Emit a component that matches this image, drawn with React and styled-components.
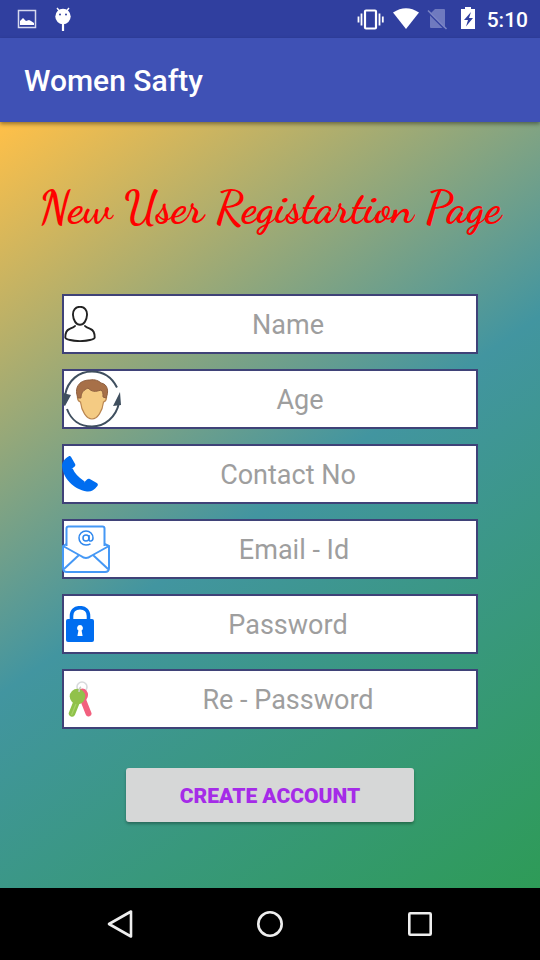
import styled, { createGlobalStyle } from "styled-components";

const GlobalStyle = createGlobalStyle`
  * {
    box-sizing: border-box;
  }

  body {
    margin: 0;
    font-family: Roboto, "Liberation Sans", sans-serif;
  }
`;

const PictureIcon = () => (
  <svg width="20" height="20" viewBox="0 0 20 20" aria-hidden="true">
    <rect x="1.500" y="1.500" width="17" height="17" fill="none" stroke="#d6d9ee" strokeWidth="1.5" />
    <path d="M3 16v-4l3-3 3 3 3-1 2 1 3 2v2z" fill="#fff" />
  </svg>
);

const DebugIcon = () => (
  <svg width="18" height="24" viewBox="0 0 18 24" aria-hidden="true">
    <path d="M3 1l2.500 3M15 1l-2.500 3" stroke="#fff" strokeWidth="1.400" />
    <circle cx="9" cy="9.500" r="7.700" fill="#fff" />
    <circle cx="6" cy="7.500" r="1" fill="#303f9f" />
    <circle cx="12" cy="7.500" r="1" fill="#303f9f" />
    <path d="M9 17v7" stroke="#fff" strokeWidth="2.200" />
  </svg>
);

const VibrateIcon = () => (
  <svg width="28" height="24" viewBox="0 0 28 24" aria-hidden="true">
    <rect x="8" y="3.500" width="11" height="18" rx="1" fill="none" stroke="#fff" strokeWidth="2.200" />
    <path d="M4.500 6.500v12M1.500 9.500v6M22.500 6.500v12M25.800 9.500v6" stroke="#fff" strokeWidth="1.800" />
  </svg>
);

const WifiIcon = () => (
  <svg width="26" height="24" viewBox="0 0 26 24" aria-hidden="true">
    <path d="M0 5.500Q13-3 26 5.500L13 22z" fill="#fff" />
  </svg>
);

const NoSimIcon = () => (
  <svg width="22" height="24" viewBox="0 0 22 24" aria-hidden="true">
    <path d="M8 2h9a1 1 0 0 1 1 1v18H4a1 1 0 0 1-1-1V7z" fill="#6f7abf" />
    <path d="M0 4.500l18 18" stroke="#303f9f" strokeWidth="1.500" />
    <path d="M1 3.500l18.500 18.500" stroke="#7a84c4" strokeWidth="1.600" />
  </svg>
);

const BatteryIcon = () => (
  <svg width="14" height="24" viewBox="0 0 14 24" aria-hidden="true">
    <path d="M4 0h6v2h4v20H0V2h4z" fill="#fff" />
    <path d="M10 5l-7 8h4l-2 6.500L12 11H8l2-6z" fill="#303f9f" />
  </svg>
);

const PersonIcon = () => (
  <svg width="36" height="36" viewBox="0 0 36 36" aria-hidden="true">
    <g fill="none" stroke="#222" strokeWidth="1.900" strokeLinecap="round">
      <path d="M18 .8c-4.500 0-7.300 3.300-7 8.200.2 5.300 3.200 9.800 7 9.800s6.800-4.500 7-9.800C25.300 4.100 22.500.8 18 .8z" />
      <path d="M13 20c-1 1.300-3 2-5.500 3-3 1.100-4.200 3.500-4.200 8.500 0 2 8 3.600 14.700 3.600s14.700-1.600 14.700-3.600c0-5-1.200-7.400-4.200-8.500-2.500-1-4.500-1.700-5.500-3" />
    </g>
  </svg>
);

const FaceIcon = () => (
  <svg width="60" height="60" viewBox="0 0 60 60" aria-hidden="true">
    <g fill="none" stroke="#3f4f5f" strokeWidth="2">
      <path d="M3 26C6 11 17 2.500 30 2.500c11 0 20 6 25 16" />
      <path d="M57 34c-3 14-14 23.500-27 23.500C18 57.500 9 51 5 40" />
    </g>
    <path d="M1 24l8 2-6 11-3-2zM58 23l1 13-8 1z" fill="#3f4f5f" />
    <path d="M18 25c-4 0-3 7 .5 8 1 9 6 17 11.500 17s10.500-8 11.500-17c3.500-1 4.500-8 .5-8l-1-6-11-3-11 3z" fill="#f4cb83" stroke="#b98550" strokeWidth="1.200" />
    <path d="M16 29c-4-9 0-18 12-18 5-1 9 1 11 3 7 1 8 9 5 15l-3-1c0-4 0-5-2-7-6 2-9 2-13-2-4 2-7 4-7 10z" fill="#a77048" stroke="#8f6041" strokeWidth="1" />
  </svg>
);

const PhoneIcon = () => (
  <svg width="36" height="36" viewBox="0 0 36 36" aria-hidden="true">
    <path d="M6.500.5c1-.7 2-.4 2.600.6l4 7c.5 1 .2 2-.7 2.700L9.500 13c2 5 7 10 12.500 13.500l3-3c.8-.8 1.800-1 2.800-.4l7 4c1.200.7 1.400 1.700.6 2.800C32 34 29 36 25 35.500 11 33 1 22 0 10 0 6 3 2.500 6.500.5z" fill="#006df0" />
    <path d="M9.500 13c2 5 7 10 12.500 13.500" fill="none" stroke="#006df0" strokeWidth="2.500" />
  </svg>
);

const MailIcon = () => (
  <svg width="48" height="48" viewBox="0 0 48 48" aria-hidden="true">
    <g fill="none" stroke="#4598f5" strokeWidth="2" strokeLinejoin="round">
      <path d="M4.500 21V3.500q0-2 2-2h34q2 0 2 2V21" />
      <path d="M4.500 19L1 21v22q0 4 4 4h38q4 0 4-4V21l-4.500-2M1 21l18 10q5 4 10 0l18-10M2 44l15-14M46 44L31 30" />
    </g>
    <g fill="none" stroke="#2e87ee" strokeWidth="1.500">
      <circle cx="24" cy="13" r="3" />
      <path d="M27 10v4.500c0 2.500 4 2 4-1.500 0-4-3-7-7-7s-7 3-7 7 3 7 7 7c2 0 3-.3 4.500-1.200" />
    </g>
  </svg>
);

const LockIcon = () => (
  <svg width="36" height="36" viewBox="0 0 36 36" aria-hidden="true">
    <path d="M9.500 15v-5C9.500 4.500 13 1.700 18 1.700s8.500 2.800 8.500 8.300v5" fill="none" stroke="#006df0" strokeWidth="3.600" />
    <rect x="4" y="13" width="28" height="23" rx="2" fill="#006df0" />
    <path d="M18 19a3 3 0 0 1 1.600 5.500l1 5.500h-5.200l1-5.500A3 3 0 0 1 18 19z" fill="#fff" />
  </svg>
);

const KeysIcon = () => (
  <svg width="36" height="36" viewBox="0 0 36 36" aria-hidden="true">
    <circle cx="20" cy="6" r="5" fill="none" stroke="#d8dadc" strokeWidth="1.600" />
    <path d="M20 16l6.500 16.500" stroke="#f2607e" strokeWidth="6" strokeLinecap="round" />
    <ellipse cx="20.500" cy="14" rx="5.500" ry="6.500" fill="#f2607e" />
    <path d="M15 20l-5 12.500" stroke="#8fc24a" strokeWidth="6.500" strokeLinecap="round" />
    <circle cx="15.500" cy="15.500" r="7.800" fill="#91c14b" />
    <path d="M14 23l-4.500 11" stroke="#a8d269" strokeWidth="1.200" />
    <path d="M17 11c0-2 0-4 2-5" fill="none" stroke="#c9cfc5" strokeWidth="1.400" />
  </svg>
);

const fields = [
  { id: "name", label: "Name", type: "text", Icon: PersonIcon },
  { id: "age", label: "Age", type: "text", Icon: FaceIcon },
  { id: "contact", label: "Contact No", type: "tel", Icon: PhoneIcon },
  { id: "email", label: "Email - Id", type: "email", Icon: MailIcon },
  { id: "password", label: "Password", type: "password", Icon: LockIcon },
  { id: "rePassword", label: "Re - Password", type: "password", Icon: KeysIcon },
];

const App = () => {
  return (
    <>
      <GlobalStyle />
      <Screen>
        <StatusBar>
          <StatusGroup $gap={17}>
            <PictureIcon />
            <DebugIcon />
          </StatusGroup>
          <StatusGroup $gap={12}>
            <StatusGroup $gap={8}>
              <VibrateIcon />
              <WifiIcon />
              <NoSimIcon />
            </StatusGroup>
            <BatteryIcon />
            <Clock>5:10</Clock>
          </StatusGroup>
        </StatusBar>
        <AppBar>
          <AppTitle>Women Safty</AppTitle>
        </AppBar>
        <Content>
          <Heading>New User Registartion Page</Heading>
          <Form onSubmit={(e) => e.preventDefault()}>
            {fields.map(({ id, label, type, Icon }) => (
              <Field key={id} htmlFor={id}>
                <Icon />
                <Input id={id} name={id} type={type} placeholder={label} aria-label={label} />
              </Field>
            ))}
            <SubmitButton type="submit">CREATE ACCOUNT</SubmitButton>
          </Form>
        </Content>
        <NavBar>
          <NavButton type="button" aria-label="Back">
            <svg width="30" height="30" viewBox="0 0 30 30">
              <path d="M26 2.500v25L4 15z" fill="none" stroke="#eee" strokeWidth="2.600" strokeLinejoin="round" />
            </svg>
          </NavButton>
          <NavButton type="button" aria-label="Home">
            <svg width="30" height="30" viewBox="0 0 30 30">
              <circle cx="15" cy="15" r="11.700" fill="none" stroke="#eee" strokeWidth="2.600" />
            </svg>
          </NavButton>
          <NavButton type="button" aria-label="Overview">
            <svg width="30" height="30" viewBox="0 0 30 30">
              <rect x="4.300" y="4.300" width="21.400" height="21.400" rx="1" fill="none" stroke="#eee" strokeWidth="2.600" />
            </svg>
          </NavButton>
        </NavBar>
      </Screen>
    </>
  );
};

const Screen = styled.div`
  display: flex;
  flex-direction: column;
  min-height: 100vh;
`;

const StatusBar = styled.div`
  display: flex;
  align-items: center;
  justify-content: space-between;
  height: 38px;
  padding: 0 12px 0 17px;
  background: #303f9f;
`;

const StatusGroup = styled.div`
  display: flex;
  align-items: center;
  gap: ${props => props.$gap}px;
`;

const Clock = styled.span`
  padding-top: 2px;
  color: #fff;
  font-size: 21px;
  font-weight: 500;
  line-height: 24px;
`;

const AppBar = styled.header`
  display: flex;
  align-items: center;
  height: 84px;
  padding: 2px 24px 0;
  background: #3f51b5;
  box-shadow: 0 2px 4px rgba(0, 0, 0, 0.4);
  z-index: 1;
`;

const AppTitle = styled.div`
  color: #fff;
  font-size: 30px;
  font-weight: 500;
  line-height: 36px;
`;

const Content = styled.main`
  flex: 1;
  padding: 56px 0 66px;
  background: linear-gradient(145deg, #ffc048, #4295a0 50%, #2e9b57);
`;

const Heading = styled.h1`
  margin: 0 0 56px;
  color: #f00;
  font-family: "Dancing Script", "Liberation Serif", cursive;
  font-size: 45px;
  font-weight: 700;
  line-height: 60px;
  text-align: center;
`;

const Form = styled.form`
  display: flex;
  flex-direction: column;
  gap: 15px;
  padding: 0 62px;
`;

const Field = styled.label`
  display: flex;
  align-items: center;
  height: 60px;
  background: #fff;
  box-shadow: inset 0 0 0 2px #3f4278;

  svg {
    flex-shrink: 0;
  }
`;

const Input = styled.input`
  flex: 1;
  min-width: 0;
  padding: 2px 0 0;
  border: 0;
  outline: 0;
  background: transparent;
  color: #222;
  font-family: inherit;
  font-size: 27px;
  line-height: 32px;
  text-align: center;

  &::placeholder {
    color: #9e9e9e;
    opacity: 1;
  }
`;

const SubmitButton = styled.button`
  align-self: center;
  width: 288px;
  height: 54px;
  margin-top: 24px;
  padding: 2px 0 0;
  border: 0;
  border-radius: 3px;
  background: #d6d7d7;
  box-shadow: 0 2px 3px rgba(0, 0, 0, 0.3);
  color: #a52be8;
  font-family: inherit;
  font-size: 21px;
  font-weight: 900;
  cursor: pointer;
`;

const NavBar = styled.nav`
  display: flex;
  align-items: center;
  justify-content: center;
  gap: 30px;
  height: 72px;
  background: #000;
`;

const NavButton = styled.button`
  display: flex;
  align-items: center;
  justify-content: center;
  width: 120px;
  height: 72px;
  padding: 0;
  border: 0;
  background: transparent;
  cursor: pointer;
`;

export default App;
